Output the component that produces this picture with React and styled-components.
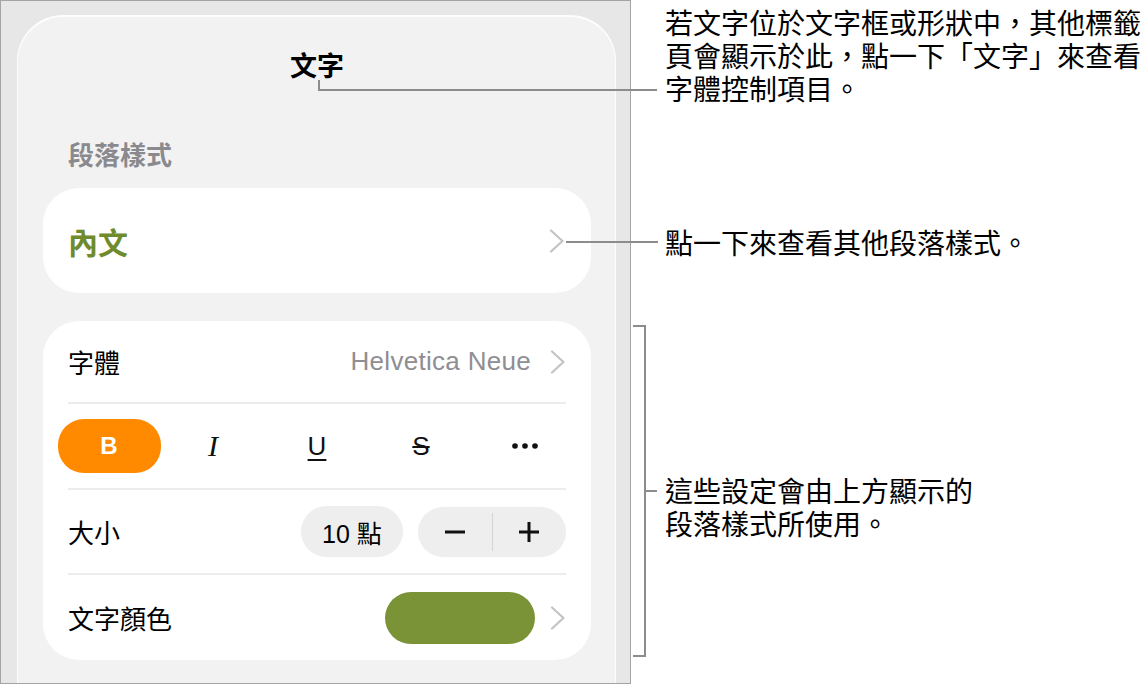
import styled, {createGlobalStyle} from "styled-components";

const GlobalStyle = createGlobalStyle`
  html, body {
    margin: 0;
    padding: 0;
    background: #fff;
  }
  body {
    font-family: "Noto Sans CJK TC", "Noto Sans", sans-serif;
    color: #000;
  }
`;

const Page = styled.div`
  position: relative;
  display: flex;
  width: 1146px;
  height: 684px;
  overflow: hidden;
  background: #fff;
`;

const Frame = styled.div`
  width: 631px;
  height: 684px;
  box-sizing: border-box;
  border: 1px solid #a4a4a4;
  background: #e7e7e7;
  padding: 14px 14px 0 16px;
  overflow: hidden;
  flex-shrink: 0;
`;

const Panel = styled.div`
  height: 100%;
  box-sizing: border-box;
  background: #f2f2f3;
  border-radius: 46px 46px 0 0;
  box-shadow: inset 0 1px 0 1px rgba(255, 255, 255, 0.8);
  padding: 33px 25px 0 26px;
`;

const Title = styled.div`
  text-align: center;
  font-size: 27px;
  font-weight: 700;
  line-height: 34px;
`;

const SectionLabel = styled.div`
  margin-top: 55px;
  padding-left: 25px;
  font-size: 26px;
  font-weight: 600;
  line-height: 34px;
  color: #8a8a8e;
`;

const Card = styled.div`
  background: #fff;
  border-radius: 36px;
  margin-top: ${(p) => p.$gap}px;
`;

const StyleCard = styled(Card)`
  height: 105px;
  display: flex;
  align-items: center;
  justify-content: space-between;
  padding: 0 26px 0 25px;
`;

const StyleName = styled.span`
  font-size: 30px;
  font-weight: 700;
  color: #6f8b2b;
`;

const SettingsCard = styled(Card)`
  padding: 0 25px;
`;

const Row = styled.div`
  box-sizing: border-box;
  display: flex;
  align-items: center;
  justify-content: space-between;
  height: ${(p) => p.$h || 85}px;
  border-bottom: ${(p) => (p.$last ? "none" : "2px solid #ececee")};
`;

const RowLabel = styled.span`
  font-size: 26px;
  line-height: 1;
`;

const RowValue = styled.div`
  display: flex;
  align-items: center;
`;

const FontName = styled.span`
  font-family: "Liberation Sans", Arial, sans-serif;
  font-size: 26px;
  letter-spacing: 0.3px;
  color: #8e8e93;
  margin-right: 19px;
`;

const FormatGrid = styled.div`
  flex: 1;
  display: grid;
  grid-template-columns: repeat(5, 1fr);
  align-items: center;
  justify-items: center;
  margin: 0 -11px;
`;

const FormatButton = styled.div`
  width: 103px;
  height: 54px;
  border-radius: 26px;
  display: flex;
  align-items: center;
  justify-content: center;
  background: ${(p) => (p.$active ? "#ff8a00" : "transparent")};
  color: ${(p) => (p.$active ? "#fff" : "#111")};
  font-family: ${(p) => p.$serif ? '"Liberation Serif", serif' : '"Liberation Sans", Arial, sans-serif'};
  font-size: ${(p) => p.$size || 26}px;
  font-weight: ${(p) => (p.$bold ? 700 : 400)};
  font-style: ${(p) => (p.$italic ? "italic" : "normal")};
  text-decoration: ${(p) => p.$deco || "none"};
  text-decoration-thickness: 2px;
  text-underline-offset: 4px;
`;

const Pill = styled.div`
  height: ${(p) => p.$h}px;
  border-radius: 26px;
  background: #eeeeef;
  display: flex;
  align-items: center;
`;

const SizePill = styled(Pill)`
  width: 102px;
  justify-content: center;
  font-family: "Liberation Sans", "Noto Sans CJK TC", sans-serif;
  font-size: 25px;
`;

const Stepper = styled(Pill)`
  width: 148px;
  margin-left: 15px;
`;

const StepHalf = styled.div`
  flex: 1;
  height: 100%;
  display: flex;
  align-items: center;
  justify-content: center;
`;

const StepDivider = styled.div`
  width: 1px;
  height: 38px;
  background: #d4d4d6;
`;

const Swatch = styled.div`
  width: 150px;
  height: 52px;
  border-radius: 26px;
  background: #7a9337;
  margin-right: 15px;
`;

const Notes = styled.div`
  margin-left: 34px;
  padding-top: 8px;
  font-family: "Liberation Sans", "Noto Sans CJK TC", sans-serif;
  font-size: 28px;
  line-height: 33px;
  white-space: nowrap;
`;

const Note = styled.p`
  margin: ${(p) => p.$top || 0}px 0 0;
`;

const Leaders = styled.svg`
  position: absolute;
  left: 0;
  top: 0;
  pointer-events: none;
`;

function Chevron() {
  return (
    <svg width="16" height="24" viewBox="0 0 16 24">
      <polyline points="2,1.5 13.5,12 2,22.5" fill="none" stroke="#c3c3c6" strokeWidth="2.2"
                strokeLinecap="round" strokeLinejoin="round"/>
    </svg>
  );
}

function Dots() {
  return (
    <svg width="28" height="8" viewBox="0 0 28 8">
      <circle cx="4" cy="4" r="2.8" fill="#111"/>
      <circle cx="14" cy="4" r="2.8" fill="#111"/>
      <circle cx="24" cy="4" r="2.8" fill="#111"/>
    </svg>
  );
}

function Minus() {
  return (
    <svg width="22" height="22" viewBox="0 0 22 22">
      <line x1="1" y1="11" x2="21" y2="11" stroke="#111" strokeWidth="3"/>
    </svg>
  );
}

function Plus() {
  return (
    <svg width="22" height="22" viewBox="0 0 22 22">
      <line x1="1" y1="11" x2="21" y2="11" stroke="#111" strokeWidth="3"/>
      <line x1="11" y1="1" x2="11" y2="21" stroke="#111" strokeWidth="3"/>
    </svg>
  );
}

export default function App() {
  return (
    <Page>
      <GlobalStyle/>
      <Frame>
        <Panel>
          <Title>文字</Title>
          <SectionLabel>段落樣式</SectionLabel>
          <StyleCard $gap={17}>
            <StyleName>內文</StyleName>
            <Chevron/>
          </StyleCard>

          <SettingsCard $gap={28}>
            <Row $h={83}>
              <RowLabel>字體</RowLabel>
              <RowValue>
                <FontName>Helvetica Neue</FontName>
                <Chevron/>
              </RowValue>
            </Row>
            <Row $h={86}>
              <FormatGrid>
                <FormatButton $active $bold $size={24}>B</FormatButton>
                <FormatButton $serif $italic $size={30}>I</FormatButton>
                <FormatButton $deco="underline">U</FormatButton>
                <FormatButton $deco="line-through">S</FormatButton>
                <FormatButton><Dots/></FormatButton>
              </FormatGrid>
            </Row>
            <Row>
              <RowLabel>大小</RowLabel>
              <RowValue>
                <SizePill $h={51}>10 點</SizePill>
                <Stepper $h={50}>
                  <StepHalf><Minus/></StepHalf>
                  <StepDivider/>
                  <StepHalf><Plus/></StepHalf>
                </Stepper>
              </RowValue>
            </Row>
            <Row $last>
              <RowLabel>文字顏色</RowLabel>
              <RowValue>
                <Swatch/>
                <Chevron/>
              </RowValue>
            </Row>
          </SettingsCard>
        </Panel>
      </Frame>

      <Notes>
        <Note>
          若文字位於文字框或形狀中，其他標籤<br/>
          頁會顯示於此，點一下「文字」來查看<br/>
          字體控制項目。
        </Note>
        <Note $top={121}>點一下來查看其他段落樣式。</Note>
        <Note $top={215}>
          這些設定會由上方顯示的<br/>
          段落樣式所使用。
        </Note>
      </Notes>

      <Leaders width="1146" height="684">
        <g stroke="#8c8c8c" strokeWidth="2" fill="none">
          <polyline points="319,80 319,90 657,90"/>
          <line x1="566" y1="242" x2="658" y2="242"/>
          <polyline points="633,326 645,326 645,656 633,656"/>
          <line x1="645" y1="491" x2="657" y2="491"/>
        </g>
      </Leaders>
    </Page>
  );
}
